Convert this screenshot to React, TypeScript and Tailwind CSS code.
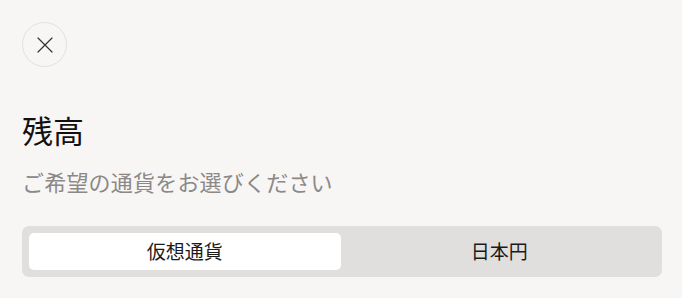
import { useState } from "react";

const font = { fontFamily: '"Noto Sans CJK JP", "Noto Sans", sans-serif' };

const CloseIcon = () => (
  <svg width="16" height="16" viewBox="0 0 16 16" fill="none">
    <path d="M1 1L15 15M15 1L1 15" stroke="#333" strokeWidth="1.2" strokeLinecap="round" />
  </svg>
);

const App = () => {
  const [currency, setCurrency] = useState<"crypto" | "jpy">("crypto");

  const tabs: { key: "crypto" | "jpy"; label: string }[] = [
    { key: "crypto", label: "仮想通貨" },
    { key: "jpy", label: "日本円" },
  ];

  return (
    <div className="min-h-[298px] w-full bg-[#f7f6f4] px-[22px] pt-[22px]" style={font}>
      <button
        type="button"
        className="flex h-[45px] w-[45px] items-center justify-center rounded-full border border-[#e3e1de] bg-[#f7f6f4]"
      >
        <CloseIcon />
      </button>

      <h1 className="mt-[45px] text-[31px] leading-[36px] font-normal text-[#111]">残高</h1>
      <p className="mt-[18px] text-[22px] leading-[30px] tracking-[0.2px] text-[#8b8886]">ご希望の通貨をお選びください</p>

      <div className="mt-[30px] flex w-[640px] gap-[3px] rounded-[7px] bg-[#e0dfdd] p-[7px]">
        {tabs.map((tab) => (
          <button
            key={tab.key}
            type="button"
            onClick={() => setCurrency(tab.key)}
            className={`flex h-[37px] flex-1 items-center justify-center rounded-[5px] text-[19px] text-[#1a1a1a] ${
              currency === tab.key ? "bg-white" : "bg-transparent"
            }`}
          >
            {tab.label}
          </button>
        ))}
      </div>
    </div>
  );
};

export default App;
